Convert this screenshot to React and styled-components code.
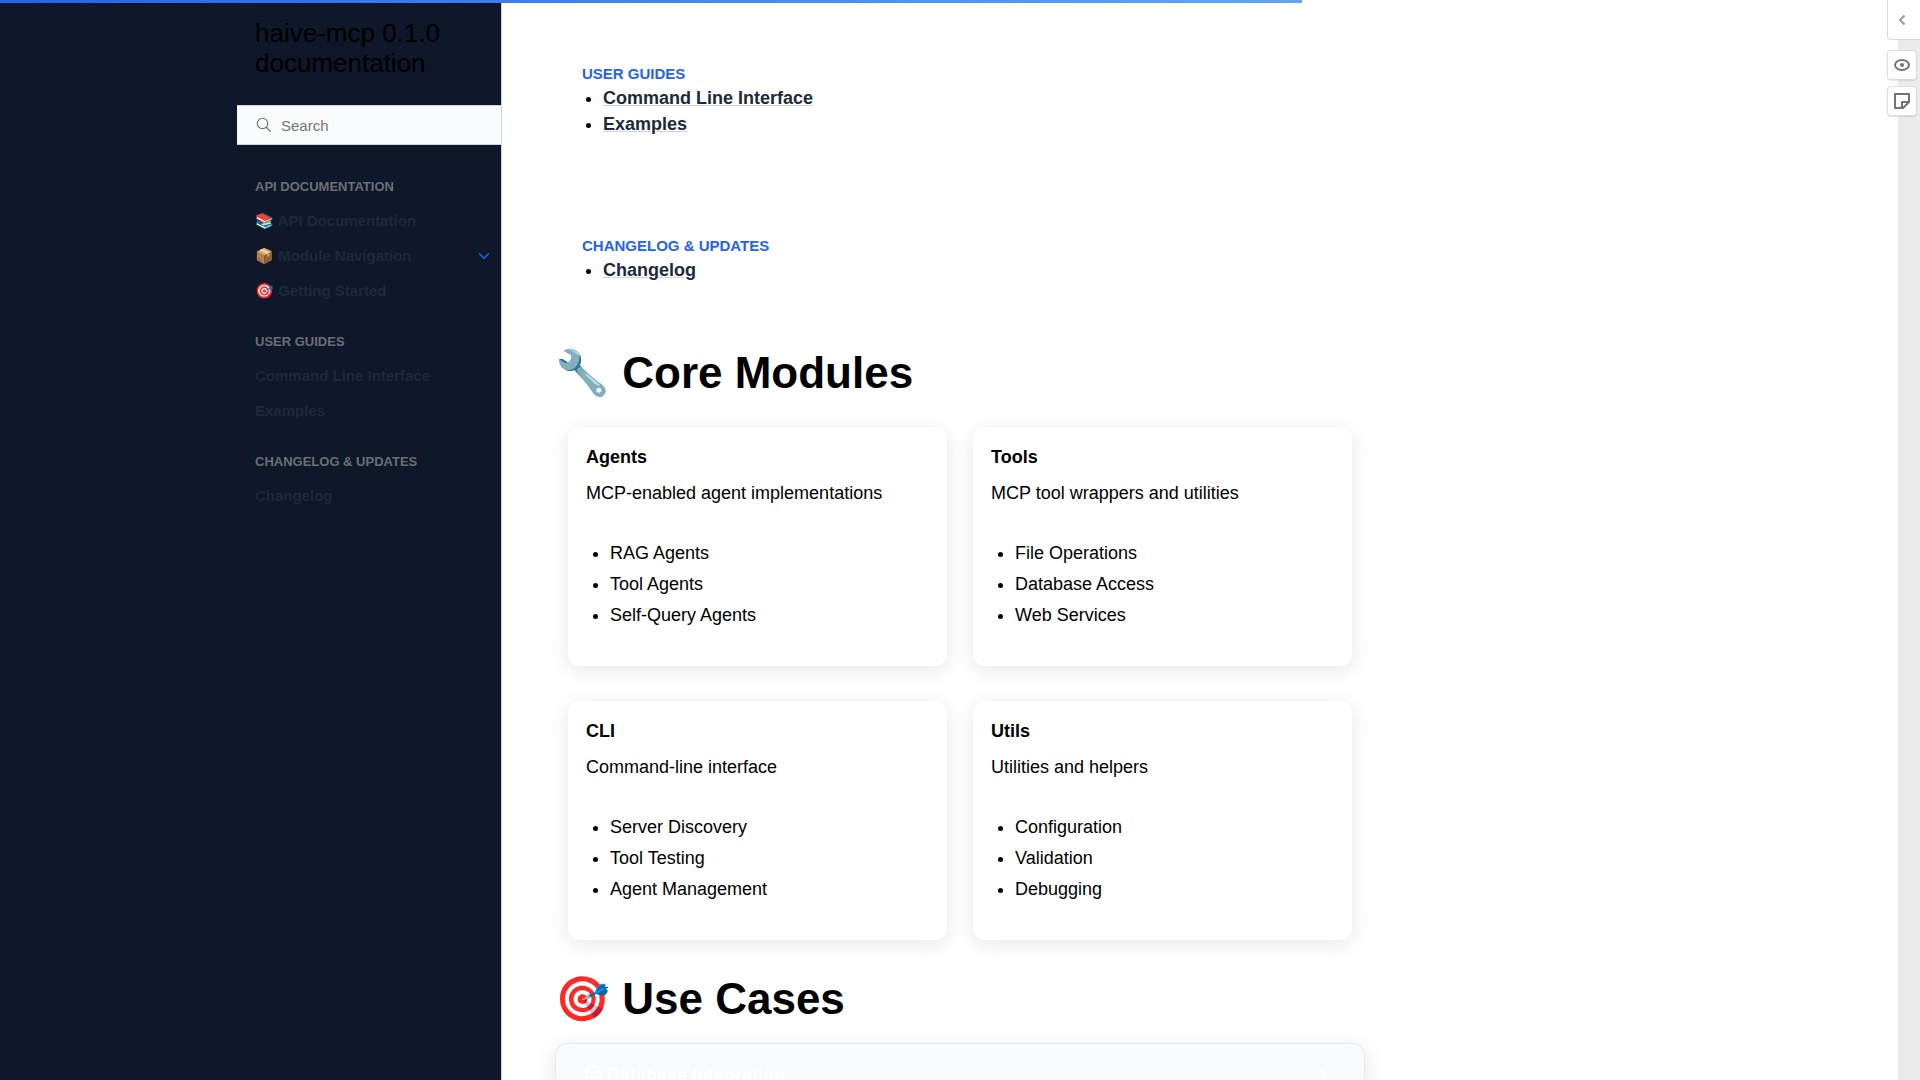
import React from "react";
import styled, { createGlobalStyle } from "styled-components";

const GlobalStyle = createGlobalStyle`
  *, *::before, *::after { box-sizing: border-box; }
  body {
    margin: 0;
    background: #fff;
    color: #000;
    font-family: "Liberation Sans", Arial, sans-serif;
    font-size: 18px;
    line-height: 26px;
  }
  h1, h2, p, ul { margin: 0; }
`;

const Page = styled.div`
  display: flex;
  height: 100vh;
  overflow: hidden;
`;

const Progress = styled.div`
  position: fixed;
  top: 0;
  left: 0;
  z-index: 5;
  width: 67.8%;
  height: 3px;
  background: linear-gradient(90deg, #2563eb, #60a5fa);
`;

const Sidebar = styled.aside`
  display: flex;
  justify-content: flex-end;
  flex: 0 0 calc(50% - 458px);
  background: #0f172a;
  border-right: 1px solid #cbd5e1;
`;

const SidebarInner = styled.div`
  width: 264px;
`;

const Brand = styled.a`
  display: block;
  padding: 18px 18px 27px;
  color: #000;
  font-size: 26px;
  line-height: 30px;
  text-decoration: none;
`;

const SearchForm = styled.form`
  display: flex;
  align-items: center;
  gap: 8px;
  height: 40px;
  padding-left: 18px;
  background: #f8fafc;
  border: solid #cbd5e1;
  border-width: 1px 0;
  color: #6b6f76;
`;

const SearchInput = styled.input`
  flex: 1;
  min-width: 0;
  height: 100%;
  padding: 0;
  border: 0;
  outline: 0;
  background: transparent;
  font: 15px "Liberation Sans", Arial, sans-serif;
  &::placeholder { color: #757575; }
`;

const Nav = styled.nav`
  padding-top: 17px;
`;

const NavCaption = styled.p`
  padding: 16px 18px 0;
  color: #6b6f76;
  font-size: 13px;
  font-weight: bold;
  line-height: 18px;
  text-transform: uppercase;
`;

const NavList = styled.ul`
  padding: 7px 0 9px;
  list-style: none;
`;

const NavItem = styled.li`
  display: flex;
  align-items: center;
  height: 35px;
`;

const NavLink = styled.a`
  flex: 1;
  padding-left: 18px;
  color: #1e293b;
  font-size: 15px;
  font-weight: bold;
  line-height: 18px;
  text-decoration: none;
`;

const Expand = styled.button`
  display: grid;
  place-items: center;
  width: 35px;
  height: 35px;
  padding: 0;
  border: 0;
  background: transparent;
  color: #2563eb;
`;

const Main = styled.main`
  flex: 1;
  min-width: 0;
  padding: 63px 53px 0;
`;

const Article = styled.article`
  max-width: 810px;
`;

const TocGroup = styled.div`
  display: flex;
  flex-direction: column;
  gap: 98px;
  padding: 0 0 63px 27px;
`;

const TocCaption = styled.p`
  padding-bottom: 1px;
  color: #2563eb;
  font-size: 15px;
  font-weight: bold;
  line-height: 21px;
  text-transform: uppercase;
`;

const TocList = styled.ul`
  padding-left: 21px;
`;

const TocLink = styled.a`
  color: #1e293b;
  font-weight: bold;
  text-decoration: underline 1px #cbd5e1;
`;

const Heading = styled.h2`
  padding-bottom: ${(p) => (p.$spaced ? "17px" : "27px")};
  padding-top: ${(p) => (p.$spaced ? "32px" : "0")};
  font-size: 44px;
  line-height: 54px;
`;

const Grid = styled.div`
  display: grid;
  grid-template-columns: 1fr 1fr;
  gap: 35px 26px;
  padding: 0 13px;
`;

const Card = styled.section`
  padding: 17px 18px 35px;
  border-radius: 12px;
  background: #fff;
  box-shadow: 0 4px 20px rgba(0, 0, 0, 0.1);
`;

const CardTitle = styled.p`
  margin-bottom: 10px;
  font-weight: bold;
`;

const CardList = styled.ul`
  padding: 32px 0 0 24px;
`;

const CardItem = styled.li`
  padding: 2px 0 3px;
`;

const UseCase = styled.details`
  padding: 18px 28px;
  border: 1px solid #e2e8f0;
  border-radius: 12px;
  background: #f8fafc;
  box-shadow: 0 4px 20px rgba(0, 0, 0, 0.1);
`;

const UseCaseTitle = styled.summary`
  display: flex;
  align-items: center;
  gap: 5px;
  color: #fff;
  font-weight: bold;
  list-style: none;
  & > svg:last-child { margin-left: auto; }
`;

const Rail = styled.aside`
  flex: 0 0 22px;
  background: #ebebeb;
`;

const Tools = styled.div`
  position: fixed;
  top: 0;
  right: 0;
  z-index: 4;
  display: flex;
  flex-direction: column;
  width: 33px;
`;

const RailToggle = styled.button`
  display: grid;
  place-items: center;
  height: 40px;
  margin-bottom: 10px;
  padding: 0 5px 0 0;
  border: solid #dbdbdb;
  border-width: 0 0 1px 1px;
  border-radius: 0 0 0 4px;
  background: #fff;
  color: #9c9c9c;
`;

const ToolButton = styled.button`
  display: grid;
  place-items: center;
  width: 30px;
  height: 30px;
  margin-bottom: 6px;
  padding: 0;
  border: 1px solid #dbdbdb;
  border-radius: 4px;
  background: #fff;
  box-shadow: 0 1px 1px rgba(0, 0, 0, 0.1);
  color: #737373;
`;

const SearchIcon = () => (
  <svg width="18" height="18" viewBox="0 0 24 24" fill="none" stroke="currentColor" strokeWidth="1.5">
    <circle cx="10" cy="10" r="7" />
    <path d="M21 21l-6-6" />
  </svg>
);

const ChevronDown = () => (
  <svg width="18" height="18" viewBox="0 0 24 24" fill="none" stroke="currentColor" strokeWidth="2" strokeLinecap="round" strokeLinejoin="round">
    <path d="M6 9l6 6 6-6" />
  </svg>
);

const DatabaseIcon = () => (
  <svg width="18" height="18" viewBox="0 0 16 16" fill="none" stroke="currentColor" strokeWidth="1.5">
    <ellipse cx="8" cy="3.5" rx="6.2" ry="2.6" />
    <path d="M1.8 3.5v9c0 1.5 2.8 2.6 6.2 2.6s6.2-1.1 6.2-2.6v-9M1.8 8c0 1.5 2.8 2.6 6.2 2.6s6.2-1.1 6.2-2.6" />
  </svg>
);

const ChevronRight = () => (
  <svg width="26" height="26" viewBox="0 0 24 24" fill="none" stroke="currentColor" strokeWidth="1.5">
    <path d="M8.500 5.500L14.500 12l-6 6.500" />
  </svg>
);

const RailChevron = () => (
  <svg width="16" height="16" viewBox="0 0 16 16" fill="none" stroke="currentColor" strokeWidth="2">
    <path d="M10.500 3.500L6 8l4.500 4.500" />
  </svg>
);

const EyeIcon = () => (
  <svg width="16" height="16" viewBox="0 0 16 16">
    <ellipse cx="8" cy="8" rx="7" ry="5" fill="none" stroke="currentColor" strokeWidth="2" />
    <circle cx="8" cy="8" r="2" fill="currentColor" />
  </svg>
);

const NoteIcon = () => (
  <svg width="16" height="16" viewBox="0 0 16 16" fill="none" stroke="currentColor" strokeWidth="2" strokeLinejoin="round">
    <path d="M1 1h14v8l-6 6H1zM8 15V9h7" />
  </svg>
);

const navGroups = [
  {
    caption: "API Documentation",
    links: [{ text: "📚 API Documentation" }, { text: "📦 Module Navigation", expandable: true }, { text: "🎯 Getting Started" }],
  },
  { caption: "User Guides", links: [{ text: "Command Line Interface" }, { text: "Examples" }] },
  { caption: "Changelog & Updates", links: [{ text: "Changelog" }] },
];

const modules = [
  { title: "Agents", text: "MCP-enabled agent implementations", items: ["RAG Agents", "Tool Agents", "Self-Query Agents"] },
  { title: "Tools", text: "MCP tool wrappers and utilities", items: ["File Operations", "Database Access", "Web Services"] },
  { title: "CLI", text: "Command-line interface", items: ["Server Discovery", "Tool Testing", "Agent Management"] },
  { title: "Utils", text: "Utilities and helpers", items: ["Configuration", "Validation", "Debugging"] },
];

export default function App() {
  return (
    <>
      <GlobalStyle />
      <Progress />
      <Page>
        <Sidebar>
          <SidebarInner>
            <Brand href="#">haive-mcp 0.1.0 documentation</Brand>
            <SearchForm role="search">
              <SearchIcon />
              <SearchInput type="search" placeholder="Search" aria-label="Search" />
            </SearchForm>
            <Nav>
              {navGroups.map((group) => (
                <React.Fragment key={group.caption}>
                  <NavCaption>{group.caption}</NavCaption>
                  <NavList>
                    {group.links.map((link) => (
                      <NavItem key={link.text}>
                        <NavLink href="#">{link.text}</NavLink>
                        {link.expandable && (
                          <Expand aria-label="Toggle navigation of Module Navigation">
                            <ChevronDown />
                          </Expand>
                        )}
                      </NavItem>
                    ))}
                  </NavList>
                </React.Fragment>
              ))}
            </Nav>
          </SidebarInner>
        </Sidebar>
        <Main>
          <Article>
            <TocGroup>
              {navGroups.slice(1).map((group) => (
                <section key={group.caption}>
                  <TocCaption>{group.caption}</TocCaption>
                  <TocList>
                    {group.links.map((link) => (
                      <li key={link.text}>
                        <TocLink href="#">{link.text}</TocLink>
                      </li>
                    ))}
                  </TocList>
                </section>
              ))}
            </TocGroup>
            <Heading>🔧 Core Modules</Heading>
            <Grid>
              {modules.map((m) => (
                <Card key={m.title}>
                  <CardTitle>{m.title}</CardTitle>
                  <p>{m.text}</p>
                  <CardList>
                    {m.items.map((item) => (
                      <CardItem key={item}>{item}</CardItem>
                    ))}
                  </CardList>
                </Card>
              ))}
            </Grid>
            <Heading $spaced>🎯 Use Cases</Heading>
            <UseCase>
              <UseCaseTitle>
                <DatabaseIcon />
                Database Integration
                <ChevronRight />
              </UseCaseTitle>
            </UseCase>
          </Article>
        </Main>
        <Rail />
      </Page>
      <Tools>
        <RailToggle aria-label="Open sidebar">
          <RailChevron />
        </RailToggle>
        <ToolButton aria-label="Show highlights">
          <EyeIcon />
        </ToolButton>
        <ToolButton aria-label="New page note">
          <NoteIcon />
        </ToolButton>
      </Tools>
    </>
  );
}
